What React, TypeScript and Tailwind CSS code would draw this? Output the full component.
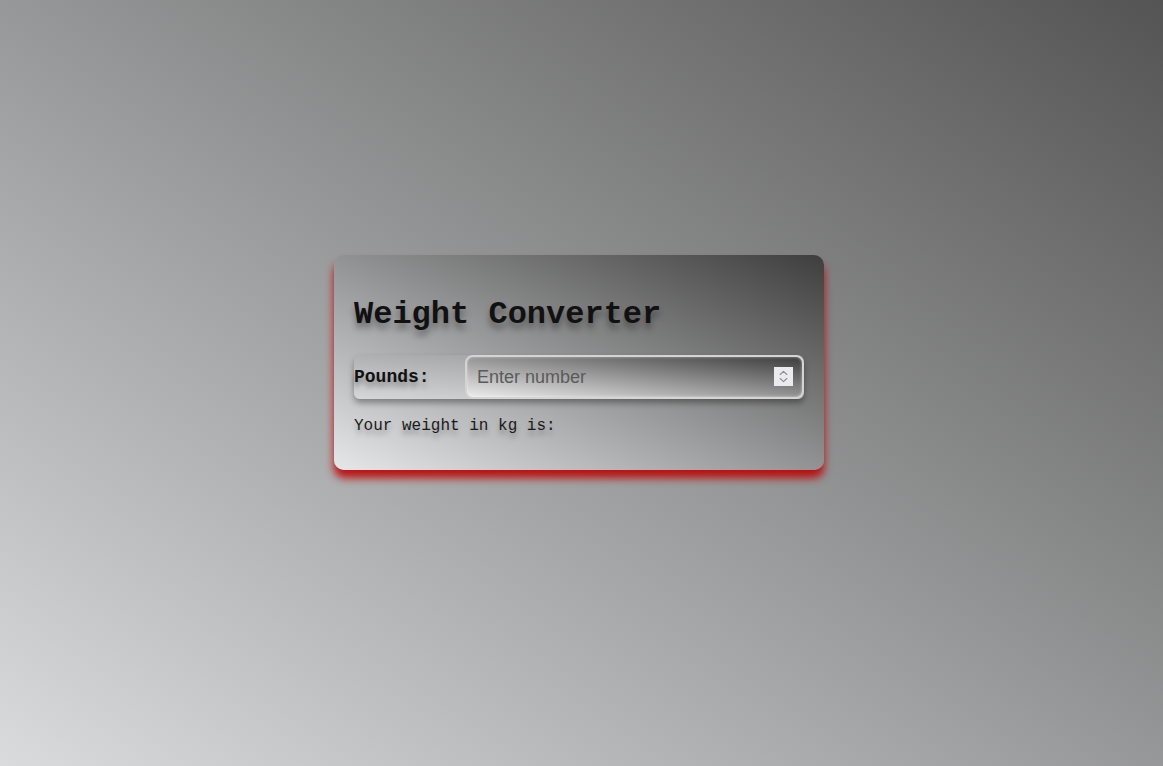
export default function App() {
  return (
    <div className="min-h-[766px] w-full bg-[linear-gradient(to_top_right,#dadbdd,#545454)] flex justify-center pt-[255px] pr-[5px]">
      <div className="w-[490px] h-[215px] rounded-[10px] px-5 pt-5 bg-[linear-gradient(to_top_right,#e6e7e9,#3e3e3e)] shadow-[0_8px_8px_rgba(190,0,0,0.9)] font-['Liberation_Mono','Courier_New',monospace] text-[#111]">
        <h1 className="mt-[22px] mb-[22px] text-[32px] leading-[36px] font-bold [text-shadow:0_6px_6px_rgba(0,0,0,0.35)]">
          Weight Converter
        </h1>

        {/* input row */}
        <div className="flex items-center h-[44px] rounded-md bg-[linear-gradient(to_top_right,#d6d7d9,#8a8a8a)] shadow-[0_4px_6px_rgba(0,0,0,0.35)]">
          <label className="w-[111px] shrink-0 text-[18px] font-bold [text-shadow:0_5px_5px_rgba(0,0,0,0.3)]">
            Pounds:
          </label>
          <div className="relative flex-1 h-full">
            <input
              type="text"
              placeholder="Enter number"
              className="w-full h-full rounded-lg border-2 border-[#d4d4d4] bg-[linear-gradient(to_top_right,#ececec,#3c3c3c)] pl-[10px] pr-9 text-[18px] font-['Liberation_Sans',Arial,sans-serif] text-[#333] placeholder:text-[#5a5a5a] outline-none shadow-[inset_0_0_3px_rgba(255,255,255,0.5)]"
            />
            {/* spin box */}
            <div className="absolute right-[11px] top-[12px] w-[19px] h-[19px] bg-[#ebebef] flex items-center justify-center">
              <svg width="9" height="13" viewBox="0 0 9 13" fill="none" stroke="#8c8c8c" strokeWidth="1.1" strokeLinecap="round" strokeLinejoin="round">
                <path d="M1.2 4.5 L4.5 1.4 L7.8 4.5" />
                <path d="M1.2 8.5 L4.5 11.6 L7.8 8.5" />
              </svg>
            </div>
          </div>
        </div>

        <p className="mt-[18px] text-[16px] leading-[18px] text-[#1a1a1a] [text-shadow:0_5px_5px_rgba(0,0,0,0.25)]">
          Your weight in kg is:
        </p>
      </div>
    </div>
  );
}
